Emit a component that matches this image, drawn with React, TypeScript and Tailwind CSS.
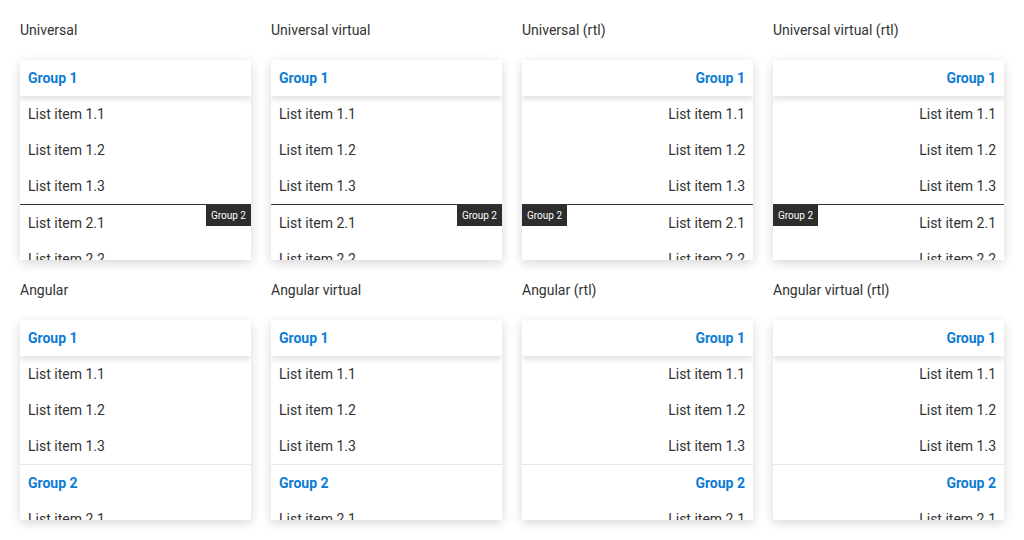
import React from 'react';

type Variant = 'universal' | 'angular';

const demos: { title: string; variant: Variant; rtl: boolean }[] = [
  { title: 'Universal', variant: 'universal', rtl: false },
  { title: 'Universal virtual', variant: 'universal', rtl: false },
  { title: 'Universal (rtl)', variant: 'universal', rtl: true },
  { title: 'Universal virtual (rtl)', variant: 'universal', rtl: true },
  { title: 'Angular', variant: 'angular', rtl: false },
  { title: 'Angular virtual', variant: 'angular', rtl: false },
  { title: 'Angular (rtl)', variant: 'angular', rtl: true },
  { title: 'Angular virtual (rtl)', variant: 'angular', rtl: true },
];

function Item({ label }: { label: string }) {
  return <div className="h-9 px-2 flex items-center text-sm text-[#333]">{label}</div>;
}

function GroupHeader({ label, shadow }: { label: string; shadow?: boolean }) {
  return (
    <div
      className={`h-9 px-2 flex items-center text-sm font-bold text-[#0c7cd5] bg-white relative z-10 ${
        shadow ? 'shadow-[0_3px_6px_rgba(0,0,0,0.13)]' : ''
      }`}
    >
      {label}
    </div>
  );
}

function ListCard({ variant, rtl }: { variant: Variant; rtl: boolean }) {
  return (
    <div
      dir={rtl ? 'rtl' : 'ltr'}
      className="h-[200px] overflow-hidden bg-white shadow-[0_3px_10px_rgba(0,0,0,0.16)]"
    >
      <GroupHeader label="Group 1" shadow />
      <Item label="List item 1.1" />
      <Item label="List item 1.2" />
      <Item label="List item 1.3" />
      {variant === 'universal' ? (
        <div className="relative border-t border-[#333]">
          {/* sticky group label */}
          <div className="absolute top-0 end-0 h-[21px] px-[5px] flex items-center bg-[#2d2d2d] text-[10px] text-white">
            Group 2
          </div>
          <Item label="List item 2.1" />
          <Item label="List item 2.2" />
        </div>
      ) : (
        <div className="border-t border-[#e6e6e6]">
          <GroupHeader label="Group 2" />
          <Item label="List item 2.1" />
        </div>
      )}
    </div>
  );
}

export default function App() {
  return (
    <div className="min-h-[540px] bg-white p-5 font-['Roboto',sans-serif]">
      <div className="grid grid-cols-4 gap-x-5 gap-y-5">
        {demos.map((d) => (
          <div key={d.title} className="flex flex-col gap-5">
            <div className="h-5 flex items-center text-sm text-[#333]">{d.title}</div>
            <ListCard variant={d.variant} rtl={d.rtl} />
          </div>
        ))}
      </div>
    </div>
  );
}
